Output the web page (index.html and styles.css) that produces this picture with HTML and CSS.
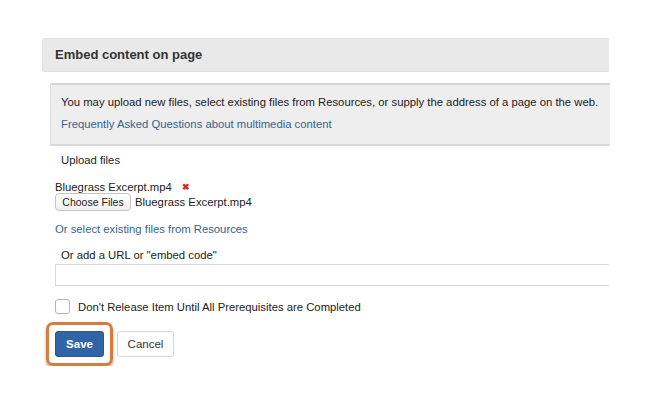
FILE: index.html
```html
<!DOCTYPE html>
<html lang="en">
<head>
    <meta charset="UTF-8">
    <title>Embed content on page</title>
    <link rel="stylesheet" href="styles.css">
</head>
<body>
    <div class="page">
        <div class="panel-head">Embed content on page</div>
        <div class="body">
            <div class="info">
                <p>You may upload new files, select existing files from Resources, or supply the address of a page on the web.</p>
                <a href="#">Frequently Asked Questions about multimedia content</a>
            </div>
            <div class="label">Upload files</div>
            <div class="file-row">
                <span>Bluegrass Excerpt.mp4</span>
                <span class="remove">&#10006;</span>
            </div>
            <div class="choose-row">
                <button class="choose">Choose Files</button>
                <span>Bluegrass Excerpt.mp4</span>
            </div>
            <a class="res-link" href="#">Or select existing files from Resources</a>
            <div class="label url-label">Or add a URL or "embed code"</div>
            <input class="url" type="text">
            <label class="check-row">
                <span class="box"></span>
                Don't Release Item Until All Prerequisites are Completed
            </label>
            <div class="actions">
                <div class="highlight">
                    <button class="save">Save</button>
                </div>
                <button class="cancel">Cancel</button>
            </div>
        </div>
    </div>
</body>
</html>
```

FILE: styles.css
```css
body {
    margin: 0;
    background: #ffffff;
    font-family: "Liberation Sans", Arial, sans-serif;
    font-size: 11.3px;
    line-height: 14px;
    color: #222;
}
.page {
    width: 567px;
    padding: 38px 0 0 42px;
}
.panel-head {
    background: #e9e9e9;
    border: 1px solid #e1e1e1;
    border-right: none;
    border-radius: 3px 0 0 3px;
    height: 32px;
    line-height: 32px;
    padding-left: 12px;
    font-size: 13px;
    font-weight: bold;
    color: #333;
}
.body {
    padding-left: 13px;
    display: flex;
    flex-direction: column;
    align-items: flex-start;
}
.info {
    margin: 11px 0 0 -5px;
    width: 549px;
    height: 59px;
    padding: 0 0 0 10px;
    background: #eeeeee;
    border-top: 2px solid #d6d6d6;
    border-bottom: 2px solid #dadada;
    border-left: 1px solid #e0e0e0;
}
.info p {
    margin: 10px 0 0;
    color: #222;
    white-space: nowrap;
}
.info a {
    display: block;
    margin-top: 8px;
    color: #3a5f94;
    text-decoration: none;
}
.label {
    margin: 7px 0 0 6px;
    color: #222;
}
.file-row {
    margin-top: 13px;
    display: flex;
    align-items: center;
    gap: 10px;
}
.remove {
    color: #d3281e;
    font-size: 9px;
    font-weight: bold;
}
.choose-row {
    margin-top: -1px;
    display: flex;
    align-items: center;
    gap: 4px;
}
.choose {
    font-family: "Liberation Sans", Arial, sans-serif;
    font-size: 10.5px;
    color: #222;
    height: 18px;
    width: 76px;
    padding: 0;
    background: linear-gradient(#ffffff, #f0f0f0);
    border: 1px solid #c4c4c4;
    border-radius: 4px;
}
.res-link {
    margin-top: 11px;
    color: #3a5f94;
    text-decoration: none;
}
.url-label {
    margin-top: 12px;
}
.url {
    margin-top: 2px;
    width: 554px;
    height: 22px;
    box-sizing: border-box;
    border: 1px solid #d8d8d8;
    border-right: none;
    padding: 0;
}
.check-row {
    margin-top: 13px;
    display: flex;
    align-items: center;
    gap: 8px;
}
.box {
    width: 13px;
    height: 13px;
    border: 1px solid #b5b5b5;
    border-radius: 3px;
    background: #fff;
}
.actions {
    margin: 8px 0 0 -9px;
    display: flex;
    align-items: center;
    gap: 4px;
}
.highlight {
    padding: 6px 6px;
    border: 3px solid #d97b3c;
    border-radius: 7px;
    box-shadow: 0 2px 3px rgba(0, 0, 0, 0.35);
}
.save, .cancel {
    height: 26px;
    font-family: "Liberation Sans", Arial, sans-serif;
    font-size: 11.5px;
    border-radius: 3px;
    padding: 0;
}
.save {
    width: 49px;
    background: #3163a7;
    border: 1px solid #2b5690;
    color: #fff;
    font-weight: bold;
}
.cancel {
    width: 57px;
    background: #fff;
    border: 1px solid #d6d6d6;
    color: #333;
}
```
